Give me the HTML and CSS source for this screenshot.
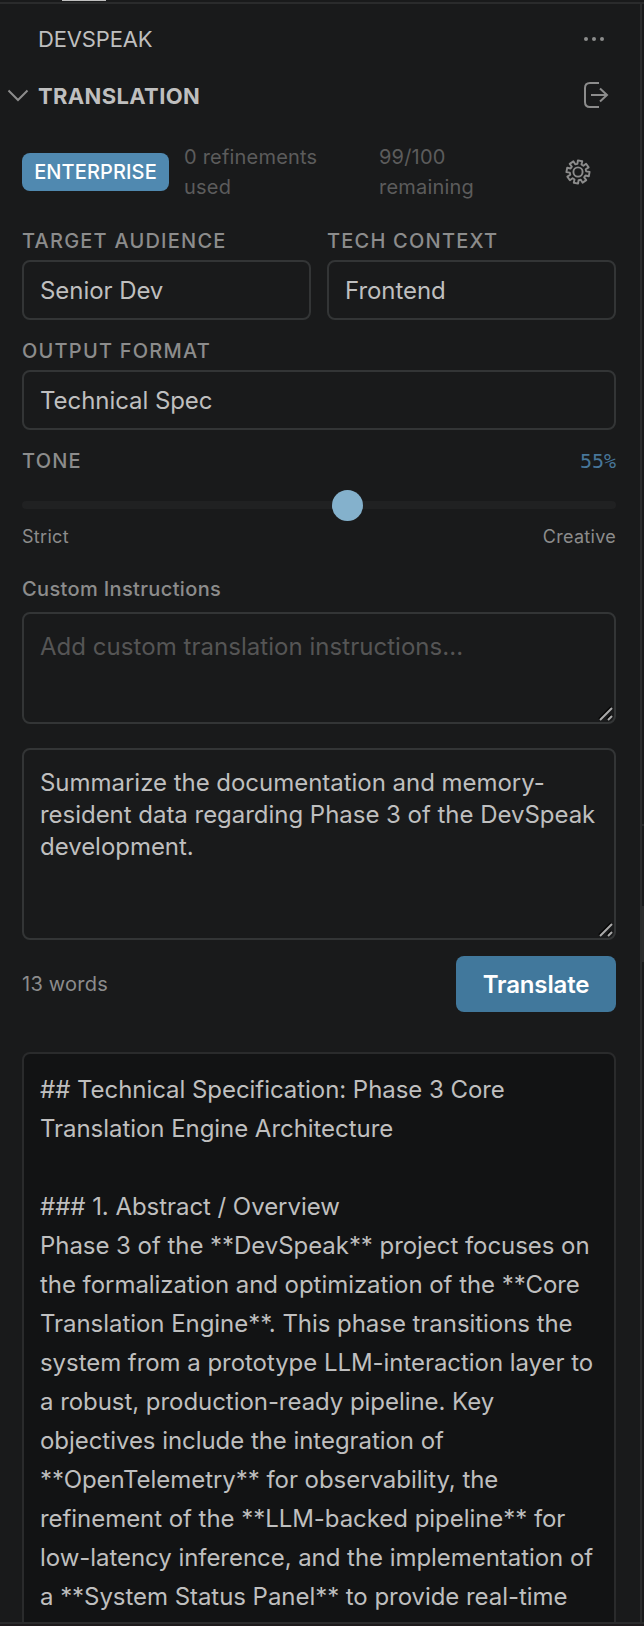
FILE: index.html
```
<!DOCTYPE html>
<html lang="en">
<head>
<meta charset="utf-8">
<title>DevSpeak</title>
<link rel="stylesheet" href="styles.css">
</head>
<body>
<div class="window">
  <div class="tab-strip"><span class="tab-active"></span></div>
  <div class="workbench">
    <main class="panel">
      <header class="panel-header">
        <span class="panel-title">DEVSPEAK</span>
        <svg class="icon-more" width="24" height="8" viewBox="0 0 24 8"><circle cx="4" cy="4" r="2"/><circle cx="12" cy="4" r="2"/><circle cx="20" cy="4" r="2"/></svg>
      </header>
      <div class="section-header">
        <svg class="icon-chevron" width="22" height="14" viewBox="0 0 22 14"><path d="M1.5 1.5 11 11 20.500 1.500"/></svg>
        <h2 class="section-title">TRANSLATION</h2>
        <svg class="icon-exit" width="28" height="28" viewBox="0 0 28 28"><path d="M17 2H8Q3 2 3 7V21Q3 26 8 26H17M9 14H25M18 7.500 25 14 18 20.500"/></svg>
      </div>
      <div class="content">
        <div class="status">
          <span class="badge">ENTERPRISE</span>
          <span class="usage">0 refinements<br>used</span>
          <span class="remaining">99/100<br>remaining</span>
          <svg class="icon-gear" width="28" height="28" viewBox="-14 -14 28 28">
            <circle r="4.600"/>
            <path d="M1.140 -8.120 2.310 -11.370 6.400 -9.670 4.930 -6.550 6.550 -4.930 9.670 -6.400 11.370 -2.310 8.120 -1.140 8.120 1.140 11.370 2.310 9.670 6.400 6.550 4.930 4.930 6.550 6.400 9.670 2.310 11.370 1.140 8.120 -1.140 8.120 -2.310 11.370 -6.400 9.670 -4.930 6.550 -6.550 4.930 -9.670 6.400 -11.370 2.310 -8.120 1.140 -8.120 -1.140 -11.370 -2.310 -9.670 -6.400 -6.550 -4.930 -4.930 -6.550 -6.400 -9.670 -2.310 -11.370 -1.140 -8.120Z" transform="rotate(-12)"/>
          </svg>
        </div>
        <div class="fields">
          <div class="field"><span class="label">TARGET AUDIENCE</span><div class="select">Senior Dev</div></div>
          <div class="field"><span class="label">TECH CONTEXT</span><div class="select">Frontend</div></div>
          <div class="field field-wide"><span class="label">OUTPUT FORMAT</span><div class="select">Technical Spec</div></div>
        </div>
        <div class="tone-head"><span class="label">TONE</span><span class="tone-value">55%</span></div>
        <div class="slider"><span class="thumb"></span></div>
        <div class="slider-ends"><span>Strict</span><span>Creative</span></div>
        <div class="instructions-label">Custom Instructions</div>
        <div class="textbox textbox-instructions">Add custom translation instructions...
          <svg class="grip" width="18" height="18" viewBox="0 0 18 18"><path class="grip-shade" d="M3 14 15 2M11 14 15 10"/><path class="grip-line" d="M4 15 16 3M12 15 16 11"/></svg>
        </div>
        <div class="textbox textbox-prompt">Summarize the documentation and memory-<br>resident data regarding Phase 3 of the DevSpeak<br>development.
          <svg class="grip" width="18" height="18" viewBox="0 0 18 18"><path class="grip-shade" d="M3 14 15 2M11 14 15 10"/><path class="grip-line" d="M4 15 16 3M12 15 16 11"/></svg>
        </div>
        <div class="actions"><span class="word-count">13 words</span><button class="translate">Translate</button></div>
        <div class="output">## Technical Specification: Phase 3 Core<br>Translation Engine Architecture<br><br>### 1. Abstract / Overview<br>Phase 3 of the **DevSpeak** project focuses on<br>the formalization and optimization of the **Core<br>Translation Engine**. This phase transitions the<br>system from a prototype LLM-interaction layer to<br>a robust, production-ready pipeline. Key<br>objectives include the integration of<br>**OpenTelemetry** for observability, the<br>refinement of the **LLM-backed pipeline** for<br>low-latency inference, and the implementation of<br>a **System Status Panel** to provide real-time</div>
      </div>
    </main>
    <aside class="edge"><div class="edge-top"></div><div class="edge-mid"></div><div class="edge-thumb"></div></aside>
  </div>
  <div class="bottom-edge"></div>
</div>
</body>
</html>
```
FILE: styles.css
```
* { box-sizing: border-box; }
body { margin: 0; background: #191a1b; color: #bfbfbf; font-family: Inter, "Liberation Sans", sans-serif; font-size: 24px; }
svg { display: block; fill: none; flex: none; }

.window { display: flex; flex-direction: column; width: 644px; height: 1626px; overflow: hidden; }
.tab-strip { height: 4px; flex: none; border-bottom: 2px solid #2a2b2c; padding-left: 62px; }
.tab-active { display: block; width: 44px; height: 1px; background: #bfbfbf; }
.workbench { display: flex; height: 1618px; flex: none; }
.panel { width: 642px; height: 1618px; border-right: 2px solid #2a2b2c; overflow: hidden; }
.bottom-edge { flex: none; height: 4px; border-top: 2px solid #2a2b2c; background: #1d1a1c; }
.edge { width: 2px; display: flex; flex-direction: column; }
.edge-top { height: 820px; }
.edge-mid { height: 82px; border-top: 2px solid #2a2b2c; }
.edge-thumb { height: 56px; background: #2b2b2c; }

.panel-header { display: flex; justify-content: space-between; align-items: center; height: 70px; padding: 0 34px 0 38px; }
.panel-title { font-size: 22px; letter-spacing: -0.15px; }
.icon-more { fill: #8c8c8c; }
.section-header { display: flex; align-items: center; height: 44px; padding: 0 30px 0 7px; }
.icon-chevron { stroke: #8c8c8c; stroke-width: 2; }
.section-title { flex: 1; margin: 0 0 0 9px; font-size: 22px; font-weight: 700; letter-spacing: 0.35px; }
.icon-exit { stroke: #8c8c8c; stroke-width: 2; margin-top: -2px; }

.content { padding: 0 24px 0 22px; }
.status { display: grid; grid-template-columns: 162px 195px 163px 28px; align-items: center; height: 60px; margin-top: 24px; font-size: 20px; line-height: 30px; letter-spacing: 0.2px; color: #5c5c5c; }
.badge { width: 147px; height: 38px; border-radius: 8px; background: #5089b0; color: #fff; font-weight: 500; line-height: 38px; text-align: center; letter-spacing: 0.12px; }
.icon-gear { margin-left: 22px; stroke: #8c8c8c; stroke-width: 1.900; stroke-linejoin: round; }

.fields { display: grid; grid-template-columns: 289px 289px; column-gap: 16px; margin-top: 24px; }
.field { height: 110px; }
.field-wide { grid-column: 1 / 3; }
.label { display: block; height: 34px; line-height: 31px; font-size: 20px; font-weight: 500; letter-spacing: 1.22px; color: #8c8c8c; }
.select { height: 60px; border: 2px solid #333536; border-radius: 8px; padding-left: 16px; line-height: 58px; letter-spacing: -0.06px; }

.tone-head { display: flex; justify-content: space-between; height: 34px; }
.tone-value { font: 20px/30px "DejaVu Sans Mono", monospace; color: #48779a; }
.slider { display: flex; align-items: center; height: 8px; margin-top: 21px; border-radius: 4px; background: #202122; }
.thumb { flex: none; width: 31px; height: 31px; margin-left: 309.500px; border-radius: 50%; background: #84b1cc; }
.slider-ends { display: flex; justify-content: space-between; margin-top: 15px; height: 26px; font-size: 18px; line-height: 26px; letter-spacing: 0.3px; color: #8c8c8c; }
.instructions-label { margin-top: 24px; height: 38px; line-height: 30px; font-size: 20px; font-weight: 500; letter-spacing: 0.36px; color: #8c8c8c; }

.textbox { position: relative; border: 2px solid #333536; border-radius: 8px; padding: 17px 0 0 16px; line-height: 32px; white-space: nowrap; }
.textbox-instructions { height: 112px; color: #555; letter-spacing: 0.04px; }
.textbox-prompt { height: 192px; margin-top: 24px; letter-spacing: -0.03px; }
.grip { position: absolute; right: 0; bottom: -1px; }
.grip-shade { stroke: #050505; stroke-width: 2; }
.grip-line { stroke: #aaa; stroke-width: 2; }

.actions { display: flex; justify-content: space-between; align-items: center; margin-top: 16px; }
.word-count { font-size: 20px; letter-spacing: 0.25px; color: #8c8c8c; }
.translate { width: 160px; height: 56px; border: 0; border-radius: 8px; padding: 0; background: #41789c; color: #fff; font: 600 24px Inter, sans-serif; letter-spacing: -0.15px; }
.output { height: 590px; margin-top: 40px; border: 2px solid #2a2b2c; border-radius: 8px; padding: 16px 0 0 16px; background: #121314; line-height: 39px; letter-spacing: -0.05px; white-space: nowrap; }
```
